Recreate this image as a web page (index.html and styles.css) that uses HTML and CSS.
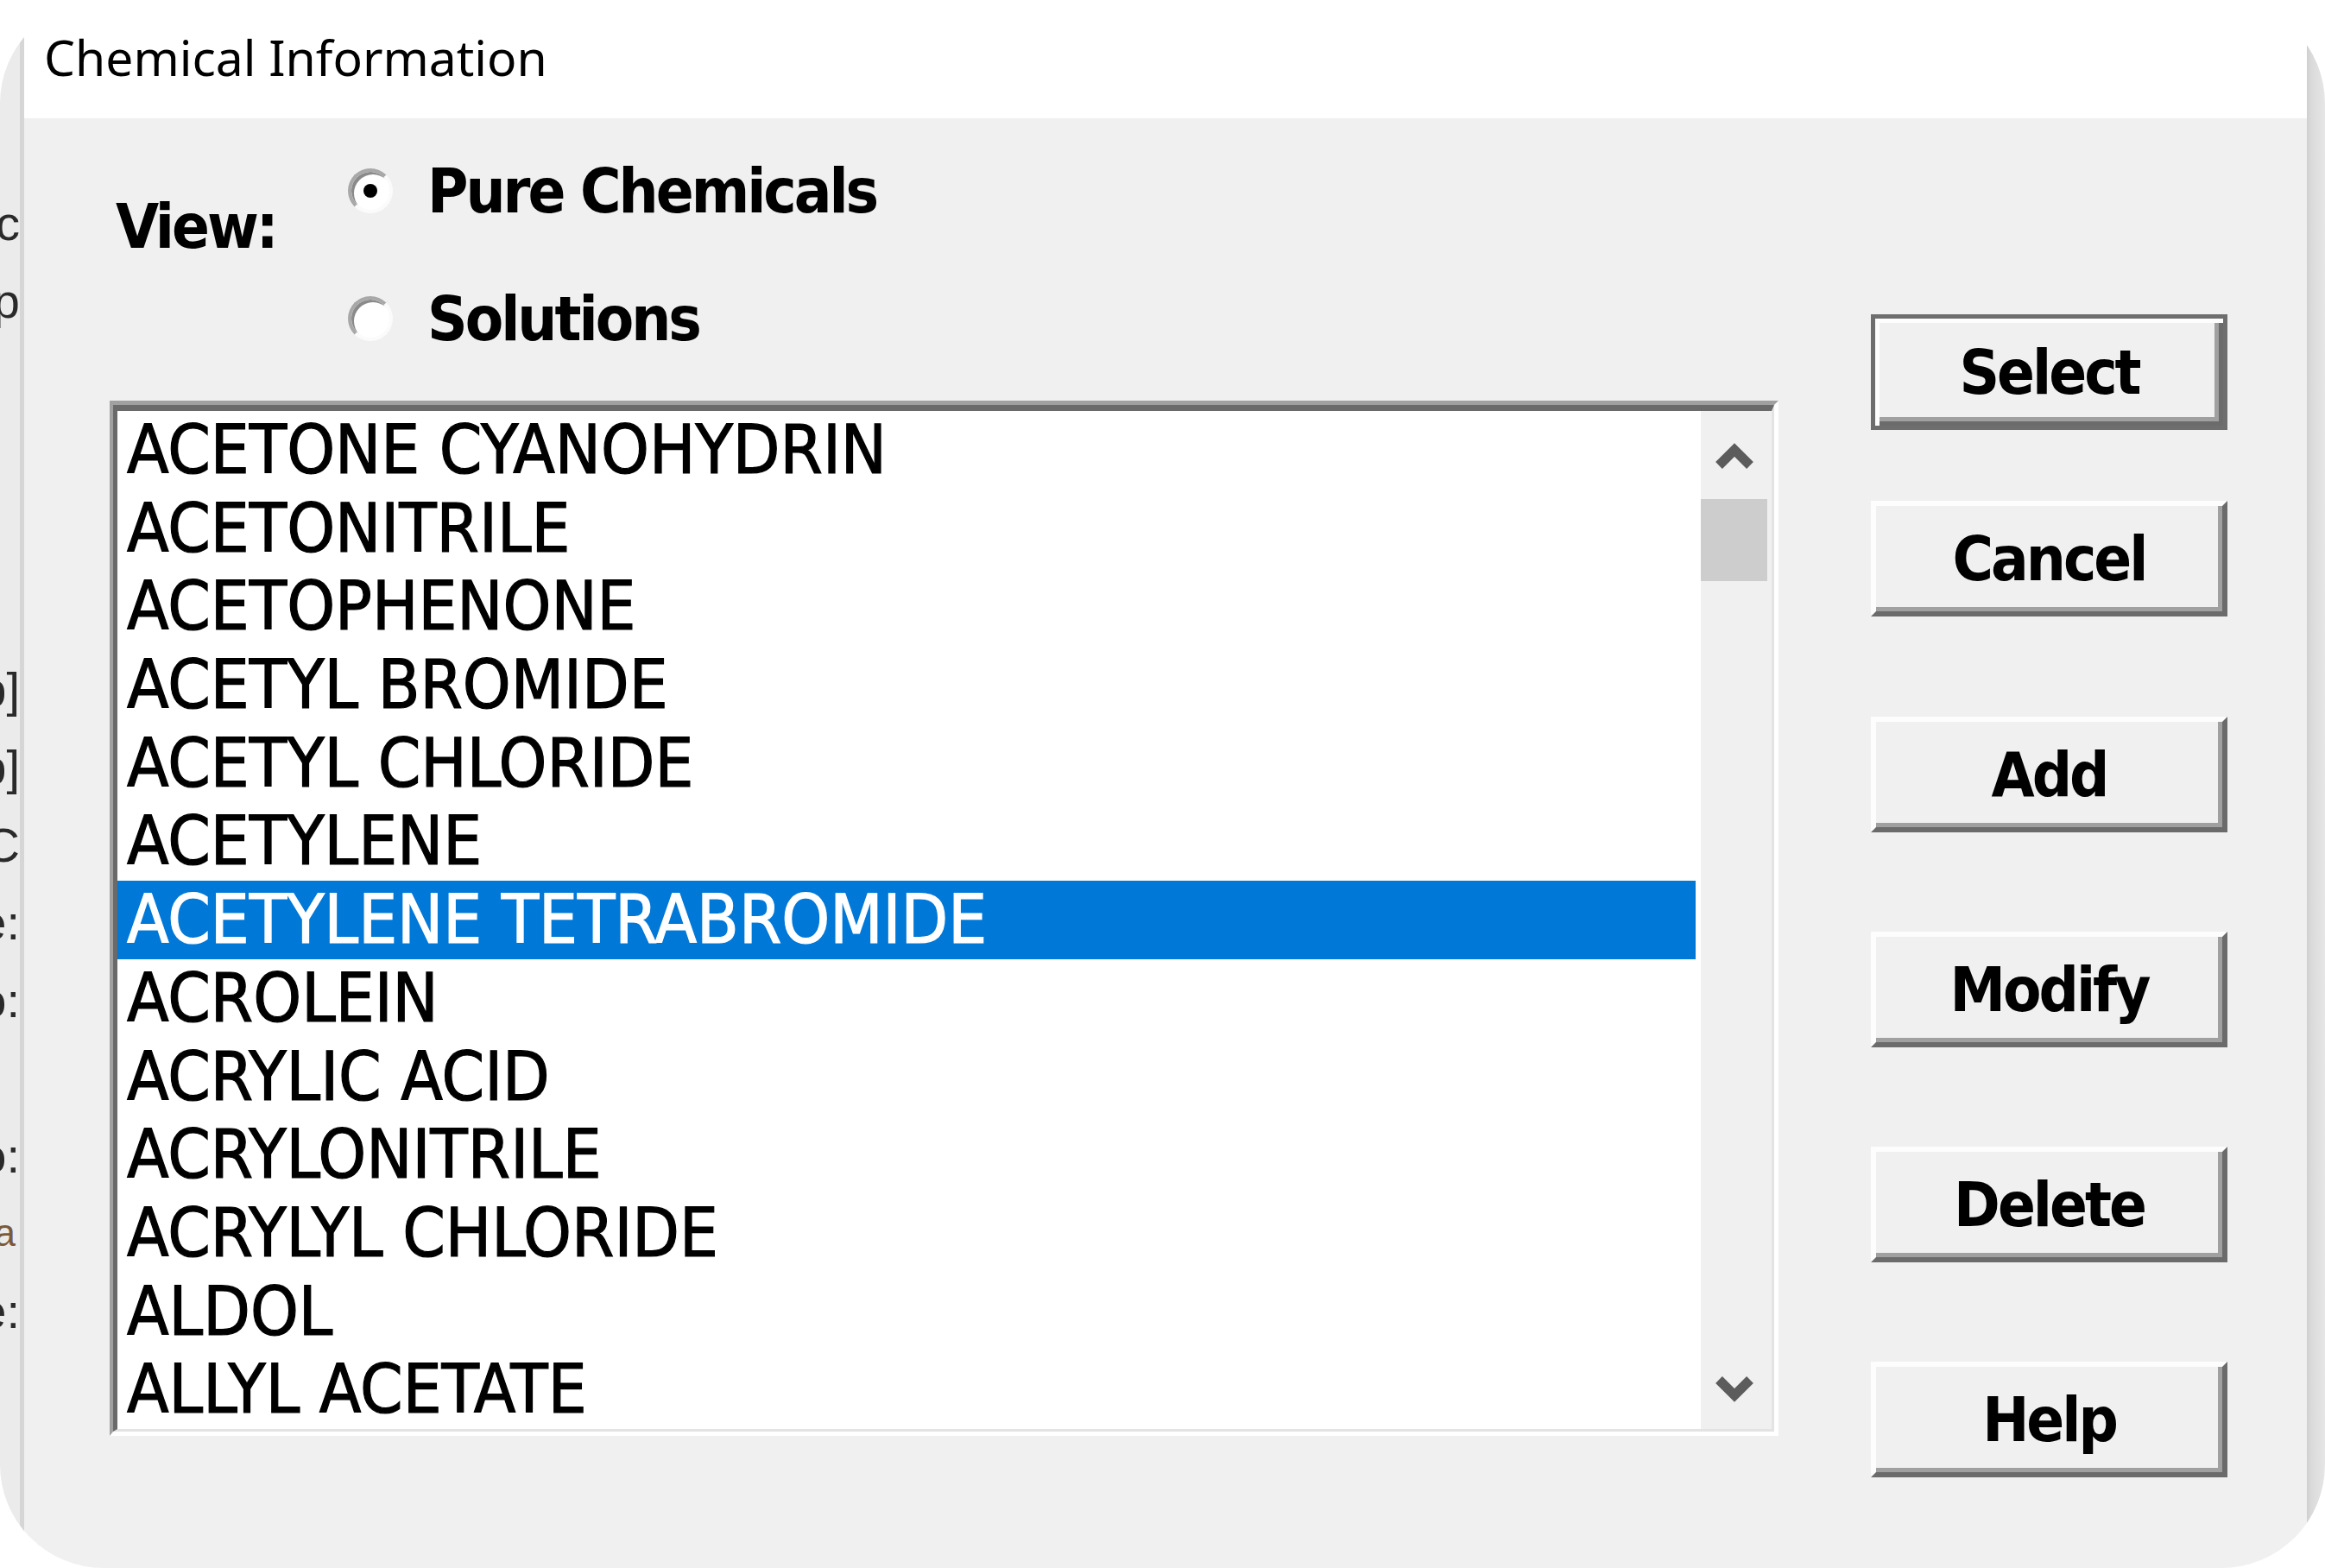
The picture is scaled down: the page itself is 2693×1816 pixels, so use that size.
FILE: index.html
```html
<!DOCTYPE html>
<html lang="en">
<head>
<meta charset="utf-8">
<title>Chemical Information</title>
<link rel="stylesheet" href="styles.css">
</head>
<body>
<div class="frame">
  <div class="bgwin-left">
    <div class="frag">Generic</div>
    <div class="frag">Top</div>
    <div class="frag"></div>
    <div class="frag"></div>
    <div class="frag"></div>
    <div class="frag"></div>
    <div class="frag">Temp]</div>
    <div class="frag">Temp]</div>
    <div class="frag">ABC</div>
    <div class="frag">Name:</div>
    <div class="frag">Ratio:</div>
    <div class="frag"></div>
    <div class="frag">Ratio:</div>
    <div class="frag frag-short">a</div>
    <div class="frag">Name:</div>
  </div>
  <div class="dialog">
    <div class="titlebar"><span class="title">Chemical Information</span></div>
    <div class="client">
      <div class="left-col">
        <div class="view-area">
          <div class="view-label ui-bold">View:</div>
          <div class="radios">
            <div class="radio-row"><span class="radio checked"></span><span class="ui-bold">Pure Chemicals</span></div>
            <div class="radio-row"><span class="radio"></span><span class="ui-bold">Solutions</span></div>
          </div>
        </div>
        <div class="listbox">
          <div class="listbox-inner">
            <ul class="items">
              <li>ACETONE CYANOHYDRIN</li>
              <li>ACETONITRILE</li>
              <li>ACETOPHENONE</li>
              <li>ACETYL BROMIDE</li>
              <li>ACETYL CHLORIDE</li>
              <li>ACETYLENE</li>
              <li class="sel">ACETYLENE TETRABROMIDE</li>
              <li>ACROLEIN</li>
              <li>ACRYLIC ACID</li>
              <li>ACRYLONITRILE</li>
              <li>ACRYLYL CHLORIDE</li>
              <li>ALDOL</li>
              <li>ALLYL ACETATE</li>
            </ul>
            <div class="scrollbar">
              <div class="sb-up">
                <svg width="44" height="36" viewBox="0 0 44 36"><polyline points="4,30 22,12 40,30" fill="none" stroke="#5c5c5c" stroke-width="11"/></svg>
              </div>
              <div class="sb-thumb"></div>
              <div class="sb-track"></div>
              <div class="sb-down">
                <svg width="44" height="36" viewBox="0 0 44 36"><polyline points="4,6 22,24 40,6" fill="none" stroke="#5c5c5c" stroke-width="11"/></svg>
              </div>
            </div>
          </div>
        </div>
      </div>
      <div class="buttons">
        <button class="btn btn-default ui-bold">Select</button>
        <button class="btn btn-cancel ui-bold">Cancel</button>
        <button class="btn btn-add ui-bold">Add</button>
        <button class="btn ui-bold">Modify</button>
        <button class="btn ui-bold">Delete</button>
        <button class="btn ui-bold">Help</button>
      </div>
    </div>
  </div>
  <div class="bgwin-right"></div>
</div>
</body>
</html>
```
FILE: styles.css
```css
html, body {
  margin: 0;
  padding: 0;
  background: #fff;
}
body {
  width: 2693px;
  height: 1816px;
  overflow: hidden;
}
.frame {
  width: 2693px;
  height: 1816px;
  border-radius: 120px;
  overflow: hidden;
  display: flex;
  background: #fff;
}
.bgwin-left {
  width: 23px;
  flex: none;
  background: #ebebeb;
  border-right: 5px solid #d6d6d6;
  padding-top: 213px;
  display: flex;
  flex-direction: column;
  overflow: hidden;
}
.frag {
  height: 90px;
  flex: none;
  display: flex;
  justify-content: flex-end;
  align-items: center;
  white-space: nowrap;
  font-family: "Liberation Sans", sans-serif;
  font-size: 56px;
  color: #2a2a2a;
}
.frag-short {
  padding-right: 5px;
  font-size: 44px;
  color: #7a5a3a;
}
.bgwin-right {
  width: 21px;
  flex: none;
  background: linear-gradient(90deg, #cfcfcf 0, #dadada 5px, #e6e6e6 100%);
}
.dialog {
  flex: 1;
  min-width: 0;
  display: flex;
  flex-direction: column;
}
.titlebar {
  height: 137px;
  flex: none;
  box-sizing: border-box;
  background: #fff;
  display: flex;
  align-items: center;
  padding: 0 0 6px 23px;
}
.title {
  font-family: "Noto Sans", "Open Sans", sans-serif;
  font-size: 57px;
  color: #000;
}
.client {
  flex: 1;
  background: #f0f0f0;
  display: flex;
  padding-left: 99px;
}
.left-col {
  width: 1933px;
  flex: none;
  display: flex;
  flex-direction: column;
}
.ui-bold {
  font-family: "DejaVu Sans Condensed", "DejaVu Sans", sans-serif;
  font-stretch: condensed;
  font-weight: bold;
  font-size: 72px;
  letter-spacing: -3px;
  line-height: 90px;
  color: #000;
}
.view-area {
  height: 327px;
  flex: none;
  box-sizing: border-box;
  padding-top: 39px;
  display: flex;
  align-items: flex-start;
}
.view-label {
  margin: 41px 0 0 7px;
  width: 269px;
}
.radios {
  display: flex;
  flex-direction: column;
  gap: 58px;
}
.radio-row {
  height: 90px;
  display: flex;
  align-items: center;
  gap: 40px;
}
.radio {
  width: 52px;
  height: 52px;
  flex: none;
  box-sizing: border-box;
  border-radius: 50%;
  background: #fff;
  border: 4px solid;
  border-color: #a8a8a8 #fbfbfb #fbfbfb #a8a8a8;
  box-shadow: inset 3px 3px 0 #8a8a8a;
  display: flex;
  align-items: center;
  justify-content: center;
}
.radio.checked::after {
  content: "";
  width: 16px;
  height: 16px;
  border-radius: 50%;
  background: #000;
}
.listbox {
  height: 1199px;
  box-sizing: border-box;
  border-style: solid;
  border-width: 5px 5px 5px 4px;
  border-color: #a0a0a0 #fff #fff #a0a0a0;
}
.listbox-inner {
  height: 100%;
  box-sizing: border-box;
  border-style: solid;
  border-width: 7px 3px 3px 5px;
  border-color: #6a6a6a #e3e3e3 #e3e3e3 #6a6a6a;
  background: #fff;
  display: flex;
}
.items {
  list-style: none;
  margin: 0;
  padding: 0;
  flex: 1;
  min-width: 0;
  font-family: "DejaVu Sans Condensed", "DejaVu Sans", sans-serif;
  font-stretch: condensed;
  font-size: 79px;
  color: #000;
  -webkit-text-stroke: 1.2px currentColor;
}
.items li {
  height: 90.7px;
  line-height: 90.7px;
  padding-left: 11px;
  margin-right: 6px;
  white-space: nowrap;
}
.items li.sel {
  background: #0078d7;
  color: #fff;
}
.scrollbar {
  width: 82px;
  flex: none;
  box-sizing: border-box;
  padding-right: 5px;
  background: #f0f0f0;
  display: flex;
  flex-direction: column;
}
.sb-up {
  height: 102px;
  display: flex;
  align-items: center;
  justify-content: center;
}
.sb-thumb {
  height: 95px;
  background: #cdcdcd;
}
.sb-track {
  flex: 1;
}
.sb-down {
  height: 90px;
  display: flex;
  align-items: center;
  justify-content: center;
}
.buttons {
  width: 413px;
  flex: none;
  margin-left: 107px;
  padding-top: 227px;
  display: flex;
  flex-direction: column;
}
.btn {
  height: 134px;
  margin: 115px 0 0;
  padding: 0;
  box-sizing: border-box;
  display: flex;
  align-items: center;
  justify-content: center;
  background: #f0f0f0;
  border-style: solid;
  border-width: 6px;
  border-color: #fdfdfd #6b6b6b #6b6b6b #fdfdfd;
  box-shadow: inset -5px -5px 0 #a0a0a0;
}
.btn-default {
  margin-top: 0;
  border: 5px solid #6e6e6e;
  box-shadow: inset 5px 5px 0 #fdfdfd, inset -5px -5px 0 #6b6b6b, inset -10px -10px 0 #a0a0a0;
}
.btn-cancel {
  margin-top: 82px;
}
.btn-add {
  margin-top: 116px;
}
```
